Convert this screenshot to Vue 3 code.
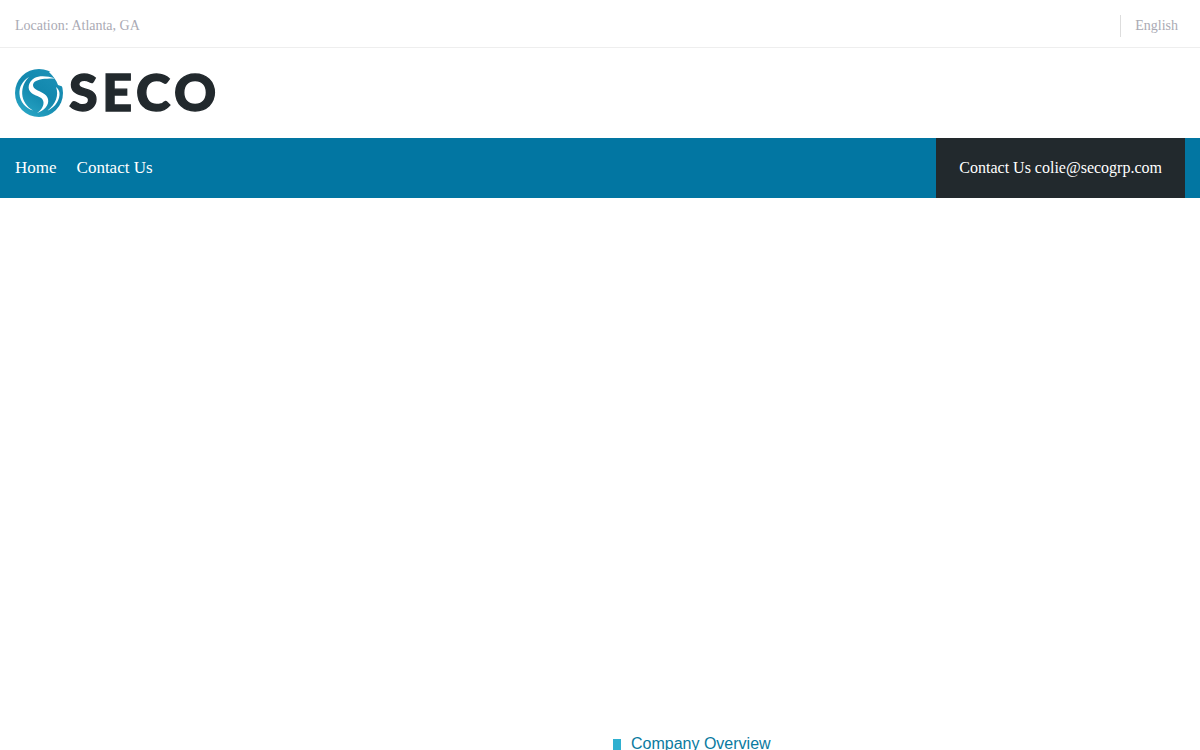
<template>
  <div class="page">
    <div class="topbar">
      <span class="location">Location: Atlanta, GA</span>
      <span class="lang">English</span>
    </div>

    <div class="logo-row">
      <a class="logo" href="#">
        <svg class="logo-mark" width="48" height="48" viewBox="0 0 48 48">
          <defs>
            <linearGradient id="swirl" x1="0.1" y1="1" x2="0.7" y2="0.1">
              <stop offset="0" stop-color="#2dabc9" />
              <stop offset="0.6" stop-color="#1287ad" />
              <stop offset="1" stop-color="#1a8fb5" />
            </linearGradient>
          </defs>
          <circle cx="24" cy="24" r="24" fill="url(#swirl)" />
          <path d="M34 3L49 1V18L43 16C41.500 11 38 7 34 3z" fill="#fff" />
          <path fill="#fff" d="M40 9.500C33 7 24 6.500 19.500 9 13.500 12.500 11.500 20 16.500 24 20 27 25 27 27.500 30.500 30 34 28 40 22 44 29 42 34.500 36 33 30 31.500 24.500 25.500 23 21 20.500 17 18 17 14 21 12 26 9.500 33 9.500 40 9.500z" />
          <path fill="#fff" d="M14 8C7.500 12 4 18 4.500 25 5 33 10.500 39 18 41.500 12 38 7.500 32 7.200 25 7 18 9.500 12.500 14 8z" />
          <path fill="#fff" d="M41 18C44 26 41 35 32 42 41 38 45 30 44.500 24 44.200 21.500 43 19.500 41 18z" />
        </svg>
        <span class="logo-word">SECO</span>
      </a>
    </div>

    <nav class="navbar">
      <div class="nav-links">
        <a href="#">Home</a>
        <a href="#">Contact Us</a>
      </div>
      <div class="nav-contact">Contact Us colie@secogrp.com</div>
    </nav>

    <main class="content">
      <div></div>
      <ul class="side-list">
        <li>Company Overview</li>
      </ul>
    </main>
  </div>
</template>

<script setup>
</script>

<style>
html, body {
  overflow: hidden;
  background: #fff;
}
</style>

<style scoped>
.page {
  font-family: "Liberation Serif", serif;
  color: #333;
  height: 750px;
  overflow: hidden;
}

.topbar {
  display: flex;
  align-items: center;
  justify-content: space-between;
  height: 43px;
  padding: 4px 22px 0 15px;
  border-bottom: 1px solid #eee;
  font-size: 14px;
  color: #aaaab4;
}

.lang {
  display: flex;
  align-items: center;
  height: 22px;
  padding-left: 14px;
  border-left: 1px solid #ddd;
}

.logo-row {
  display: flex;
  align-items: center;
  height: 90px;
  padding-left: 15px;
}

.logo {
  display: flex;
  align-items: center;
  gap: 6px;
  text-decoration: none;
}

.logo-word {
  font-family: Lato, sans-serif;
  font-weight: 900;
  font-size: 52px;
  line-height: 48px;
  letter-spacing: 4.6px;
  color: #22292d;
  -webkit-text-stroke: 1.4px #22292d;
  transform: translateY(-2px);
}

.navbar {
  display: flex;
  justify-content: space-between;
  height: 60px;
  padding: 0 15px;
  background: #0276a2;
}

.nav-links {
  display: flex;
  align-items: center;
  gap: 20px;
}

.nav-links a {
  color: #fff;
  font-size: 17px;
  text-decoration: none;
}

.nav-contact {
  display: flex;
  align-items: center;
  padding: 0 23px;
  background: #22292d;
  color: #fff;
  font-size: 16px;
}

.content {
  display: grid;
  grid-template-columns: 1fr 1fr;
  padding-top: 537px;
}

.side-list {
  list-style: none;
  margin: 0;
  padding: 0 0 0 13px;
  font-family: "Liberation Sans", sans-serif;
  font-size: 16px;
  color: #0a7a9f;
}

.side-list li {
  display: flex;
  align-items: center;
  gap: 10px;
  line-height: 18px;
}

.side-list li::before {
  content: "";
  width: 8px;
  height: 11px;
  background: #2fb0d0;
}
</style>
